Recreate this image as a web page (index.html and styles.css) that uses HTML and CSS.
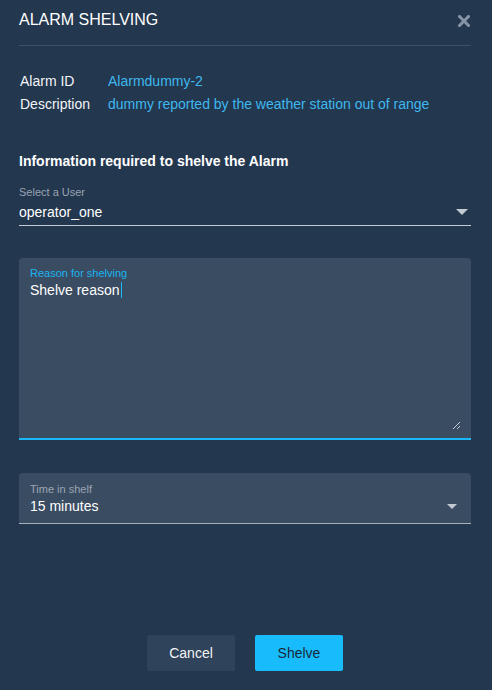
FILE: index.html
```html
<!DOCTYPE html>
<html>
<head>
<meta charset="utf-8">
<link rel="stylesheet" href="styles.css">
</head>
<body>
<div class="dialog">
  <div class="header">
    <div class="title">ALARM SHELVING</div>
    <svg class="close" width="12" height="12" viewBox="0 0 12 12"><path d="M1.5 1.5 L10.5 10.5 M10.5 1.5 L1.5 10.5" stroke="#8795a6" stroke-width="3" stroke-linecap="square"/></svg>
  </div>
  <div class="info">
    <div class="row"><span class="key">Alarm ID</span><span class="val">Alarmdummy-2</span></div>
    <div class="row"><span class="key">Description</span><span class="val">dummy reported by the weather station out of range</span></div>
  </div>
  <div class="heading">Information required to shelve the Alarm</div>
  <div class="select">
    <div class="flabel">Select a User</div>
    <div class="fvalue"><span>operator_one</span><span class="arrow"></span></div>
  </div>
  <div class="area">
    <div class="flabel blue">Reason for shelving</div>
    <div class="fvalue">Shelve reason<span class="caret"></span></div>
    <svg class="grip" width="9" height="9" viewBox="0 0 9 9"><path d="M1 8 L8 1 M5 8 L8 5" stroke="#c8ced6" stroke-width="1"/></svg>
  </div>
  <div class="filled">
    <div class="flabel">Time in shelf</div>
    <div class="fvalue"><span>15 minutes</span><span class="arrow"></span></div>
  </div>
  <div class="actions">
    <button class="btn cancel">Cancel</button>
    <button class="btn primary">Shelve</button>
  </div>
</div>
</body>
</html>
```

FILE: styles.css
```css
html, body {
  margin: 0;
  padding: 0;
  background: #23374f;
  height: 100%;
}
body {
  font-family: "Liberation Sans", Arial, sans-serif;
  color: #ffffff;
}
.dialog {
  padding: 0 21px 0 19px;
}
.header {
  display: flex;
  justify-content: space-between;
  align-items: center;
  padding: 10px 0 15px;
  border-bottom: 1px solid #3d5066;
}
.title {
  font-size: 16px;
  line-height: 20px;
}
.close {
  margin-right: 1px;
  margin-top: 2px;
}
.info {
  margin-top: 24px;
  font-size: 14px;
}
.row {
  display: flex;
  line-height: 23px;
}
.key {
  width: 88px;
  padding-left: 1px;
  color: #f2f4f7;
}
.val {
  color: #3fb7ee;
}
.heading {
  margin-top: 35px;
  font-size: 14px;
  font-weight: bold;
  line-height: 20px;
}
.flabel {
  font-size: 11px;
  line-height: 13px;
  color: #9aa5b2;
}
.flabel.blue {
  color: #1ab4f0;
}
.fvalue {
  font-size: 14px;
  line-height: 20px;
  display: flex;
  align-items: center;
  justify-content: space-between;
}
.arrow {
  width: 0;
  height: 0;
  border-left: 6px solid transparent;
  border-right: 6px solid transparent;
  border-top: 6px solid #c3c9d1;
  margin-right: 3px;
}
.select {
  margin-top: 15px;
  padding-bottom: 3px;
  border-bottom: 1px solid #c5cbd2;
}
.select .fvalue {
  margin-top: 3px;
}
.area {
  position: relative;
  margin-top: 32px;
  height: 171px;
  padding: 9px 11px 0;
  background: #3a4c62;
  border-radius: 4px 4px 0 0;
  border-bottom: 2px solid #1ab8f6;
}
.area .fvalue {
  justify-content: flex-start;
}
.caret {
  display: inline-block;
  width: 1px;
  height: 16px;
  background: #1ab8f6;
  margin-left: 1px;
}
.grip {
  position: absolute;
  right: 10px;
  bottom: 8px;
}
.filled {
  margin-top: 33px;
  padding: 10px 11px 7px;
  background: #3a4c62;
  border-radius: 4px 4px 0 0;
  border-bottom: 1px solid #a7b0ba;
}
.filled .arrow {
  border-left-width: 5px;
  border-right-width: 5px;
  border-top-width: 5px;
  margin-right: 3px;
}
.actions {
  margin-top: 111px;
  display: flex;
  justify-content: center;
  gap: 20px;
}
.btn {
  width: 88px;
  height: 36px;
  border: none;
  border-radius: 2px;
  font-family: "Liberation Sans", Arial, sans-serif;
  font-size: 14px;
  padding: 0;
}
.cancel {
  background: #2f435a;
  color: #f2f4f7;
}
.primary {
  background: #18bcfd;
  color: #17283a;
}
```
